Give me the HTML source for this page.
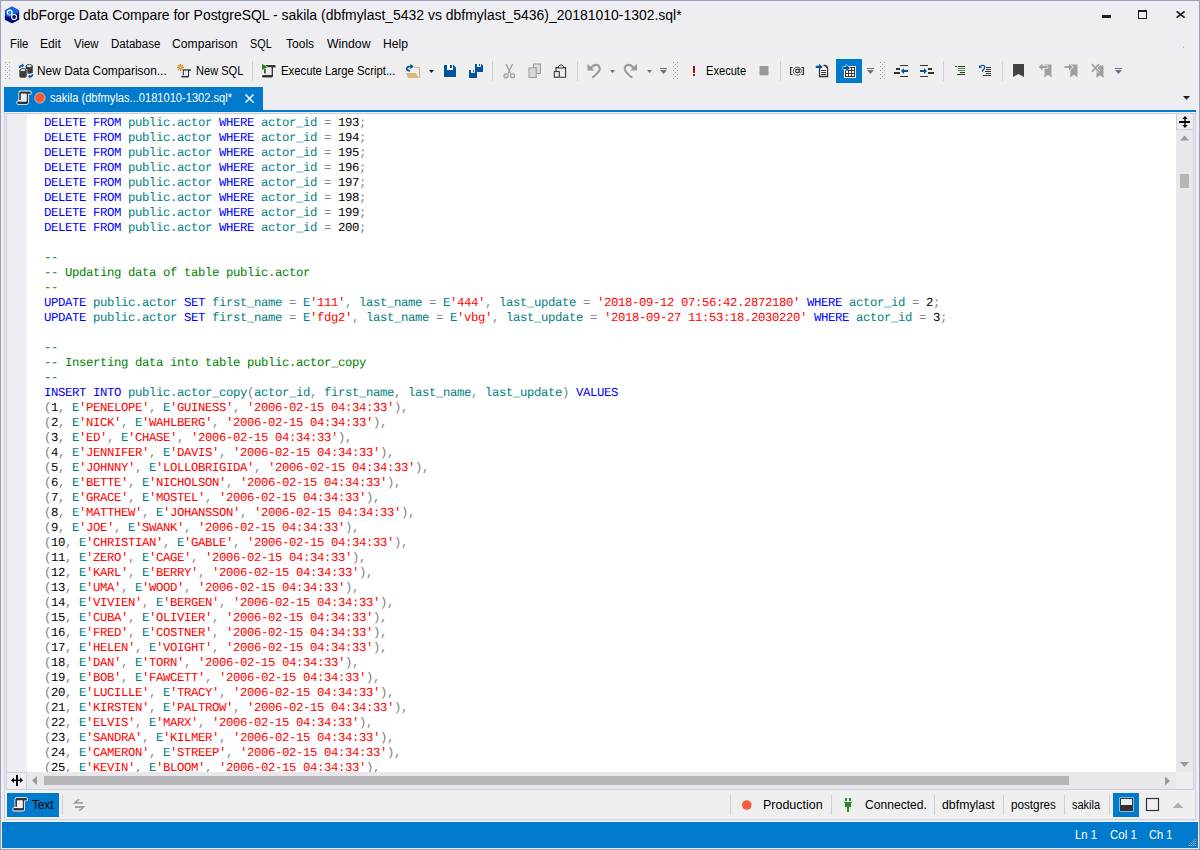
<!DOCTYPE html>
<html><head><meta charset="utf-8">
<style>
*{margin:0;padding:0;box-sizing:border-box}
html,body{width:1200px;height:850px;overflow:hidden;background:#EEEEF2;font-family:"Liberation Sans",sans-serif;color:#1E1E1E}
.a{position:absolute}
#win{position:absolute;left:0;top:0;width:1200px;height:850px;border:1px solid #9B9FB9}
.t{position:absolute;white-space:nowrap;font-size:12px;line-height:14px}
.sep{position:absolute;width:1px;background:#CCCEDB}
svg{position:absolute;overflow:visible}
/* code */
#code{position:absolute;left:17px;top:2px;font-family:"Liberation Mono",monospace;font-size:12.3px;letter-spacing:-0.3800px;line-height:15px;white-space:pre;color:#000;text-rendering:geometricPrecision}
#code i{font-style:normal}
.k{color:#0000FF}.d{color:#008080}.c{color:#008000}.s{color:#FF0000}.n{color:#000}.p{color:#808080}
</style></head><body>
<div id="win"></div>

<!-- title bar -->

<!-- menu -->

<!-- toolbar texts -->

<div class="a" style="left:2px;top:57px;width:655px;height:28px;background:#EFEFF0"></div>
<div class="a" style="left:670px;top:57px;width:442px;height:28px;background:#EFEFF0"></div>
<!-- tab strip -->
<div class="a" style="left:4px;top:87px;width:259px;height:25px;background:#007ACC"></div>
<div class="a" style="left:4px;top:110px;width:1192px;height:2px;background:#007ACC"></div>

<!-- editor panel -->
<div class="a" style="left:4px;top:112px;width:1192px;height:708px;border:1px solid #CCCEDB;border-top:none;background:#EEEEF2"></div>
<div class="a" style="left:6px;top:113px;width:1188px;height:677px;border:1px solid #CCCEDB;background:#EEEEF2"></div>
<div class="a" style="left:27px;top:114px;width:1149px;height:658px;background:#fff"></div>
<div class="a" style="left:27px;top:114px;width:1149px;height:658px;overflow:hidden"><div id="code"><i class=k>DELETE</i> <i class=k>FROM</i> <i class=d>public.actor</i> <i class=k>WHERE</i> <i class=d>actor_id</i> <i class=p>=</i> <i class=n>193</i><i class=p>;</i>
<i class=k>DELETE</i> <i class=k>FROM</i> <i class=d>public.actor</i> <i class=k>WHERE</i> <i class=d>actor_id</i> <i class=p>=</i> <i class=n>194</i><i class=p>;</i>
<i class=k>DELETE</i> <i class=k>FROM</i> <i class=d>public.actor</i> <i class=k>WHERE</i> <i class=d>actor_id</i> <i class=p>=</i> <i class=n>195</i><i class=p>;</i>
<i class=k>DELETE</i> <i class=k>FROM</i> <i class=d>public.actor</i> <i class=k>WHERE</i> <i class=d>actor_id</i> <i class=p>=</i> <i class=n>196</i><i class=p>;</i>
<i class=k>DELETE</i> <i class=k>FROM</i> <i class=d>public.actor</i> <i class=k>WHERE</i> <i class=d>actor_id</i> <i class=p>=</i> <i class=n>197</i><i class=p>;</i>
<i class=k>DELETE</i> <i class=k>FROM</i> <i class=d>public.actor</i> <i class=k>WHERE</i> <i class=d>actor_id</i> <i class=p>=</i> <i class=n>198</i><i class=p>;</i>
<i class=k>DELETE</i> <i class=k>FROM</i> <i class=d>public.actor</i> <i class=k>WHERE</i> <i class=d>actor_id</i> <i class=p>=</i> <i class=n>199</i><i class=p>;</i>
<i class=k>DELETE</i> <i class=k>FROM</i> <i class=d>public.actor</i> <i class=k>WHERE</i> <i class=d>actor_id</i> <i class=p>=</i> <i class=n>200</i><i class=p>;</i>

<i class=c>--</i>
<i class=c>-- Updating data of table public.actor</i>
<i class=c>--</i>
<i class=k>UPDATE</i> <i class=d>public.actor</i> <i class=k>SET</i> <i class=d>first_name</i> <i class=p>=</i> <i class=d>E</i><i class=s>'111'</i><i class=p>,</i> <i class=d>last_name</i> <i class=p>=</i> <i class=d>E</i><i class=s>'444'</i><i class=p>,</i> <i class=d>last_update</i> <i class=p>=</i> <i class=s>'2018-09-12 07:56:42.2872180'</i> <i class=k>WHERE</i> <i class=d>actor_id</i> <i class=p>=</i> <i class=n>2</i><i class=p>;</i>
<i class=k>UPDATE</i> <i class=d>public.actor</i> <i class=k>SET</i> <i class=d>first_name</i> <i class=p>=</i> <i class=d>E</i><i class=s>'fdg2'</i><i class=p>,</i> <i class=d>last_name</i> <i class=p>=</i> <i class=d>E</i><i class=s>'vbg'</i><i class=p>,</i> <i class=d>last_update</i> <i class=p>=</i> <i class=s>'2018-09-27 11:53:18.2030220'</i> <i class=k>WHERE</i> <i class=d>actor_id</i> <i class=p>=</i> <i class=n>3</i><i class=p>;</i>

<i class=c>--</i>
<i class=c>-- Inserting data into table public.actor_copy</i>
<i class=c>--</i>
<i class=k>INSERT</i> <i class=k>INTO</i> <i class=d>public.actor_copy</i><i class=p>(</i><i class=d>actor_id</i><i class=p>,</i> <i class=d>first_name</i><i class=p>,</i> <i class=d>last_name</i><i class=p>,</i> <i class=d>last_update</i><i class=p>)</i> <i class=k>VALUES</i>
<i class=p>(</i><i class=n>1</i><i class=p>,</i> <i class=d>E</i><i class=s>'PENELOPE'</i><i class=p>,</i> <i class=d>E</i><i class=s>'GUINESS'</i><i class=p>,</i> <i class=s>'2006-02-15 04:34:33'</i><i class=p>)</i><i class=p>,</i>
<i class=p>(</i><i class=n>2</i><i class=p>,</i> <i class=d>E</i><i class=s>'NICK'</i><i class=p>,</i> <i class=d>E</i><i class=s>'WAHLBERG'</i><i class=p>,</i> <i class=s>'2006-02-15 04:34:33'</i><i class=p>)</i><i class=p>,</i>
<i class=p>(</i><i class=n>3</i><i class=p>,</i> <i class=d>E</i><i class=s>'ED'</i><i class=p>,</i> <i class=d>E</i><i class=s>'CHASE'</i><i class=p>,</i> <i class=s>'2006-02-15 04:34:33'</i><i class=p>)</i><i class=p>,</i>
<i class=p>(</i><i class=n>4</i><i class=p>,</i> <i class=d>E</i><i class=s>'JENNIFER'</i><i class=p>,</i> <i class=d>E</i><i class=s>'DAVIS'</i><i class=p>,</i> <i class=s>'2006-02-15 04:34:33'</i><i class=p>)</i><i class=p>,</i>
<i class=p>(</i><i class=n>5</i><i class=p>,</i> <i class=d>E</i><i class=s>'JOHNNY'</i><i class=p>,</i> <i class=d>E</i><i class=s>'LOLLOBRIGIDA'</i><i class=p>,</i> <i class=s>'2006-02-15 04:34:33'</i><i class=p>)</i><i class=p>,</i>
<i class=p>(</i><i class=n>6</i><i class=p>,</i> <i class=d>E</i><i class=s>'BETTE'</i><i class=p>,</i> <i class=d>E</i><i class=s>'NICHOLSON'</i><i class=p>,</i> <i class=s>'2006-02-15 04:34:33'</i><i class=p>)</i><i class=p>,</i>
<i class=p>(</i><i class=n>7</i><i class=p>,</i> <i class=d>E</i><i class=s>'GRACE'</i><i class=p>,</i> <i class=d>E</i><i class=s>'MOSTEL'</i><i class=p>,</i> <i class=s>'2006-02-15 04:34:33'</i><i class=p>)</i><i class=p>,</i>
<i class=p>(</i><i class=n>8</i><i class=p>,</i> <i class=d>E</i><i class=s>'MATTHEW'</i><i class=p>,</i> <i class=d>E</i><i class=s>'JOHANSSON'</i><i class=p>,</i> <i class=s>'2006-02-15 04:34:33'</i><i class=p>)</i><i class=p>,</i>
<i class=p>(</i><i class=n>9</i><i class=p>,</i> <i class=d>E</i><i class=s>'JOE'</i><i class=p>,</i> <i class=d>E</i><i class=s>'SWANK'</i><i class=p>,</i> <i class=s>'2006-02-15 04:34:33'</i><i class=p>)</i><i class=p>,</i>
<i class=p>(</i><i class=n>10</i><i class=p>,</i> <i class=d>E</i><i class=s>'CHRISTIAN'</i><i class=p>,</i> <i class=d>E</i><i class=s>'GABLE'</i><i class=p>,</i> <i class=s>'2006-02-15 04:34:33'</i><i class=p>)</i><i class=p>,</i>
<i class=p>(</i><i class=n>11</i><i class=p>,</i> <i class=d>E</i><i class=s>'ZERO'</i><i class=p>,</i> <i class=d>E</i><i class=s>'CAGE'</i><i class=p>,</i> <i class=s>'2006-02-15 04:34:33'</i><i class=p>)</i><i class=p>,</i>
<i class=p>(</i><i class=n>12</i><i class=p>,</i> <i class=d>E</i><i class=s>'KARL'</i><i class=p>,</i> <i class=d>E</i><i class=s>'BERRY'</i><i class=p>,</i> <i class=s>'2006-02-15 04:34:33'</i><i class=p>)</i><i class=p>,</i>
<i class=p>(</i><i class=n>13</i><i class=p>,</i> <i class=d>E</i><i class=s>'UMA'</i><i class=p>,</i> <i class=d>E</i><i class=s>'WOOD'</i><i class=p>,</i> <i class=s>'2006-02-15 04:34:33'</i><i class=p>)</i><i class=p>,</i>
<i class=p>(</i><i class=n>14</i><i class=p>,</i> <i class=d>E</i><i class=s>'VIVIEN'</i><i class=p>,</i> <i class=d>E</i><i class=s>'BERGEN'</i><i class=p>,</i> <i class=s>'2006-02-15 04:34:33'</i><i class=p>)</i><i class=p>,</i>
<i class=p>(</i><i class=n>15</i><i class=p>,</i> <i class=d>E</i><i class=s>'CUBA'</i><i class=p>,</i> <i class=d>E</i><i class=s>'OLIVIER'</i><i class=p>,</i> <i class=s>'2006-02-15 04:34:33'</i><i class=p>)</i><i class=p>,</i>
<i class=p>(</i><i class=n>16</i><i class=p>,</i> <i class=d>E</i><i class=s>'FRED'</i><i class=p>,</i> <i class=d>E</i><i class=s>'COSTNER'</i><i class=p>,</i> <i class=s>'2006-02-15 04:34:33'</i><i class=p>)</i><i class=p>,</i>
<i class=p>(</i><i class=n>17</i><i class=p>,</i> <i class=d>E</i><i class=s>'HELEN'</i><i class=p>,</i> <i class=d>E</i><i class=s>'VOIGHT'</i><i class=p>,</i> <i class=s>'2006-02-15 04:34:33'</i><i class=p>)</i><i class=p>,</i>
<i class=p>(</i><i class=n>18</i><i class=p>,</i> <i class=d>E</i><i class=s>'DAN'</i><i class=p>,</i> <i class=d>E</i><i class=s>'TORN'</i><i class=p>,</i> <i class=s>'2006-02-15 04:34:33'</i><i class=p>)</i><i class=p>,</i>
<i class=p>(</i><i class=n>19</i><i class=p>,</i> <i class=d>E</i><i class=s>'BOB'</i><i class=p>,</i> <i class=d>E</i><i class=s>'FAWCETT'</i><i class=p>,</i> <i class=s>'2006-02-15 04:34:33'</i><i class=p>)</i><i class=p>,</i>
<i class=p>(</i><i class=n>20</i><i class=p>,</i> <i class=d>E</i><i class=s>'LUCILLE'</i><i class=p>,</i> <i class=d>E</i><i class=s>'TRACY'</i><i class=p>,</i> <i class=s>'2006-02-15 04:34:33'</i><i class=p>)</i><i class=p>,</i>
<i class=p>(</i><i class=n>21</i><i class=p>,</i> <i class=d>E</i><i class=s>'KIRSTEN'</i><i class=p>,</i> <i class=d>E</i><i class=s>'PALTROW'</i><i class=p>,</i> <i class=s>'2006-02-15 04:34:33'</i><i class=p>)</i><i class=p>,</i>
<i class=p>(</i><i class=n>22</i><i class=p>,</i> <i class=d>E</i><i class=s>'ELVIS'</i><i class=p>,</i> <i class=d>E</i><i class=s>'MARX'</i><i class=p>,</i> <i class=s>'2006-02-15 04:34:33'</i><i class=p>)</i><i class=p>,</i>
<i class=p>(</i><i class=n>23</i><i class=p>,</i> <i class=d>E</i><i class=s>'SANDRA'</i><i class=p>,</i> <i class=d>E</i><i class=s>'KILMER'</i><i class=p>,</i> <i class=s>'2006-02-15 04:34:33'</i><i class=p>)</i><i class=p>,</i>
<i class=p>(</i><i class=n>24</i><i class=p>,</i> <i class=d>E</i><i class=s>'CAMERON'</i><i class=p>,</i> <i class=d>E</i><i class=s>'STREEP'</i><i class=p>,</i> <i class=s>'2006-02-15 04:34:33'</i><i class=p>)</i><i class=p>,</i>
<i class=p>(</i><i class=n>25</i><i class=p>,</i> <i class=d>E</i><i class=s>'KEVIN'</i><i class=p>,</i> <i class=d>E</i><i class=s>'BLOOM'</i><i class=p>,</i> <i class=s>'2006-02-15 04:34:33'</i><i class=p>)</i><i class=p>,</i></div></div>
<!-- vscroll -->
<div class="a" style="left:1176px;top:129px;width:17px;height:643px;background:#E8E8EC"></div>
<div class="a" style="left:1176px;top:113px;width:18px;height:17px;border:1px solid #CCCEDB;background:#EEEEF2"></div>
<div class="a" style="left:1180px;top:174px;width:9px;height:14px;background:#B5B5B8"></div>
<!-- hscroll -->
<div class="a" style="left:27px;top:772px;width:1149px;height:17px;background:#E8E8EC"></div>
<div class="a" style="left:6px;top:772px;width:21px;height:18px;border:1px solid #CCCEDB;background:#EEEEF2"></div>
<div class="a" style="left:44px;top:776px;width:1025px;height:9px;background:#B5B5B8"></div>

<!-- bottom toolbar -->
<div class="a" style="left:5px;top:790px;width:1190px;height:29px;background:#EFEFF0"></div>
<div class="a" style="left:7px;top:793px;width:52px;height:24px;background:#007ACC"></div>
<div class="a" style="left:1113px;top:793px;width:26px;height:24px;background:#007ACC"></div>

<!-- status bar -->
<div class="a" style="left:2px;top:822px;width:1196px;height:26px;background:#007ACC"></div>


<div class="t" style="left:23.40px;top:7px;font-size:14px;line-height:16px;color:#000000;transform:scaleX(0.9964);transform-origin:0 0;">dbForge Data Compare for PostgreSQL - sakila (dbfmylast_5432 vs dbfmylast_5436)_20181010-1302.sql*</div>
<div class="t" style="left:9.55px;top:37px;font-size:12px;line-height:14px;color:#000000;transform:scaleX(0.9401);transform-origin:0 0;">File</div>
<div class="t" style="left:40.36px;top:37px;font-size:12px;line-height:14px;color:#000000;transform:scaleX(1.0093);transform-origin:0 0;">Edit</div>
<div class="t" style="left:74.24px;top:37px;font-size:12px;line-height:14px;color:#000000;transform:scaleX(0.9475);transform-origin:0 0;">View</div>
<div class="t" style="left:111.38px;top:37px;font-size:12px;line-height:14px;color:#000000;transform:scaleX(0.9595);transform-origin:0 0;">Database</div>
<div class="t" style="left:172.32px;top:37px;font-size:12px;line-height:14px;color:#000000;transform:scaleX(1.0119);transform-origin:0 0;">Comparison</div>
<div class="t" style="left:250.36px;top:37px;font-size:12px;line-height:14px;color:#000000;transform:scaleX(0.9017);transform-origin:0 0;">SQL</div>
<div class="t" style="left:285.70px;top:37px;font-size:12px;line-height:14px;color:#000000;transform:scaleX(1.0031);transform-origin:0 0;">Tools</div>
<div class="t" style="left:326.80px;top:37px;font-size:12px;line-height:14px;color:#000000;transform:scaleX(1.0183);transform-origin:0 0;">Window</div>
<div class="t" style="left:383.43px;top:37px;font-size:12px;line-height:14px;color:#000000;transform:scaleX(1.0098);transform-origin:0 0;">Help</div>
<div class="t" style="left:37.39px;top:64px;font-size:12px;line-height:14px;color:#000000;transform:scaleX(0.9922);transform-origin:0 0;">New Data Comparison...</div>
<div class="t" style="left:195.90px;top:64px;font-size:12px;line-height:14px;color:#000000;transform:scaleX(0.9210);transform-origin:0 0;">New SQL</div>
<div class="t" style="left:280.91px;top:64px;font-size:12px;line-height:14px;color:#000000;transform:scaleX(0.9422);transform-origin:0 0;">Execute Large Script...</div>
<div class="t" style="left:705.89px;top:64px;font-size:12px;line-height:14px;color:#000000;transform:scaleX(0.9255);transform-origin:0 0;">Execute</div>
<div class="t" style="left:50.18px;top:91px;font-size:12px;line-height:14px;color:#FFFFFF;transform:scaleX(0.9249);transform-origin:0 0;">sakila (dbfmylas...0181010-1302.sql*</div>
<div class="t" style="left:32.37px;top:798px;font-size:12px;line-height:14px;color:#000000;transform:scaleX(0.9735);transform-origin:0 0;">Text</div>
<div class="t" style="left:763.31px;top:798px;font-size:12px;line-height:14px;color:#000000;transform:scaleX(1.0386);transform-origin:0 0;">Production</div>
<div class="t" style="left:864.82px;top:798px;font-size:12px;line-height:14px;color:#000000;transform:scaleX(1.0079);transform-origin:0 0;">Connected.</div>
<div class="t" style="left:942.41px;top:798px;font-size:12px;line-height:14px;color:#000000;transform:scaleX(1.0272);transform-origin:0 0;">dbfmylast</div>
<div class="t" style="left:1010.58px;top:798px;font-size:12px;line-height:14px;color:#000000;transform:scaleX(0.9754);transform-origin:0 0;">postgres</div>
<div class="t" style="left:1072.00px;top:798px;font-size:12px;line-height:14px;color:#000000;transform:scaleX(0.9127);transform-origin:0 0;">sakila</div>
<div class="t" style="left:1075.42px;top:828px;font-size:12px;line-height:14px;color:#FFFFFF;transform:scaleX(0.9404);transform-origin:0 0;">Ln 1</div>
<div class="t" style="left:1110.47px;top:828px;font-size:12px;line-height:14px;color:#FFFFFF;transform:scaleX(0.9572);transform-origin:0 0;">Col 1</div>
<div class="t" style="left:1149.46px;top:828px;font-size:12px;line-height:14px;color:#FFFFFF;transform:scaleX(0.9191);transform-origin:0 0;">Ch 1</div>
<svg width="1200" height="850" style="left:0;top:0">
<!-- app icon -->
<polygon points="12,6.6 19.1,10.3 19.1,19.7 12,23.3 4.9,19.7 4.9,10.3" fill="#0C50D0"/>
<polygon points="4.9,15.5 4.9,19.7 12,23.3 19.1,19.7 19.1,12 15,14.5 9,17.5" fill="#000C78"/>
<polygon points="12,6.6 19.1,10.3 19.1,12 12,15 4.9,11.5 4.9,10.3" fill="#1A62E0"/>
<circle cx="9.7" cy="12.5" r="2.4" fill="#1C88EA" stroke="#fff" stroke-width="1.2"/>
<circle cx="14.1" cy="17" r="2.5" fill="#000A66" stroke="#fff" stroke-width="1.2"/>
<rect x="12.6" y="17.6" width="3" height="0.9" fill="#4A6EA8"/>
<rect x="8.2" y="14.2" width="3" height="0.8" fill="#4A90E0"/>
<!-- window controls -->
<rect x="1102" y="15" width="9" height="3" fill="#1E1E1E"/>
<rect x="1138.5" y="10.5" width="8" height="8" fill="none" stroke="#1E1E1E" stroke-width="1"/>
<rect x="1138" y="10" width="9" height="2" fill="#1E1E1E"/>
<path d="M1176.6 11.4 L1184.6 17.6 M1184.6 11.4 L1176.6 17.6" stroke="#1E1E1E" stroke-width="1.8"/>

<!-- toolbar grips -->
<g fill="#999">
<rect x="5" y="62" width="1" height="1"/><rect x="9" y="62" width="1" height="1"/><rect x="7" y="64" width="1" height="1"/>
<rect x="5" y="66" width="1" height="1"/><rect x="9" y="66" width="1" height="1"/><rect x="7" y="68" width="1" height="1"/>
<rect x="5" y="70" width="1" height="1"/><rect x="9" y="70" width="1" height="1"/><rect x="7" y="72" width="1" height="1"/>
<rect x="5" y="74" width="1" height="1"/><rect x="9" y="74" width="1" height="1"/><rect x="7" y="76" width="1" height="1"/>
<rect x="5" y="78" width="1" height="1"/><rect x="9" y="78" width="1" height="1"/>
<rect x="673" y="62" width="1" height="1"/><rect x="677" y="62" width="1" height="1"/><rect x="675" y="64" width="1" height="1"/>
<rect x="673" y="66" width="1" height="1"/><rect x="677" y="66" width="1" height="1"/><rect x="675" y="68" width="1" height="1"/>
<rect x="673" y="70" width="1" height="1"/><rect x="677" y="70" width="1" height="1"/><rect x="675" y="72" width="1" height="1"/>
<rect x="673" y="74" width="1" height="1"/><rect x="677" y="74" width="1" height="1"/><rect x="675" y="76" width="1" height="1"/>
<rect x="673" y="78" width="1" height="1"/><rect x="677" y="78" width="1" height="1"/>
<rect x="880" y="62" width="1" height="1"/><rect x="884" y="62" width="1" height="1"/><rect x="882" y="64" width="1" height="1"/>
<rect x="880" y="66" width="1" height="1"/><rect x="884" y="66" width="1" height="1"/><rect x="882" y="68" width="1" height="1"/>
<rect x="880" y="70" width="1" height="1"/><rect x="884" y="70" width="1" height="1"/><rect x="882" y="72" width="1" height="1"/>
<rect x="880" y="74" width="1" height="1"/><rect x="884" y="74" width="1" height="1"/><rect x="882" y="76" width="1" height="1"/>
<rect x="880" y="78" width="1" height="1"/><rect x="884" y="78" width="1" height="1"/>
</g>
<!-- separators -->
<g fill="#CCCEDB">
<rect x="252" y="61" width="1" height="20"/><rect x="492" y="61" width="1" height="20"/><rect x="577" y="61" width="1" height="20"/>
<rect x="780" y="61" width="1" height="20"/><rect x="943" y="61" width="1" height="20"/><rect x="1002" y="61" width="1" height="20"/>
<rect x="62" y="795" width="1" height="20"/><rect x="730" y="795" width="1" height="20"/><rect x="831" y="795" width="1" height="20"/>
<rect x="934" y="795" width="1" height="20"/><rect x="1003" y="795" width="1" height="20"/><rect x="1064" y="795" width="1" height="20"/>
<rect x="1109" y="795" width="1" height="20"/>
</g>

<!-- New Data Comparison icon -->
<path d="M25.6 65.8 V72.6 Q25.6 73.7 29.2 73.7 Q32.8 73.7 32.8 72.6 V65.8 Z" fill="#3C3C3C"/>
<ellipse cx="29.2" cy="66" rx="3.1" ry="1.45" fill="#fff" stroke="#3C3C3C" stroke-width="1"/>
<path d="M19.3 69.9 V75.9 Q19.3 77.8 23 77.8 Q26.7 77.8 26.7 75.9 V69.9 Z" fill="#3C3C3C" stroke="#EFEFF0" stroke-width="1.2" paint-order="stroke"/>
<ellipse cx="23" cy="70.1" rx="3.1" ry="1.45" fill="#fff" stroke="#3C3C3C" stroke-width="1"/>
<path d="M19.6 68 q0 -2.5 2.6 -2.5" fill="none" stroke="#0055A8" stroke-width="1.6"/>
<path d="M21.9 63.5 l2.5 2 l-2.5 2z" fill="#0055A8"/>
<path d="M32.6 74.3 q0 2.3 -2.6 2.3" fill="none" stroke="#0055A8" stroke-width="1.6"/>
<path d="M30.3 74.6 l-2.5 2 l2.5 2z" fill="#0055A8"/>

<!-- New SQL icon -->
<g transform="translate(181.2,69.2) scale(0.72,0.66)"><path d="M2.1 8.6 V1.5 Q2.1 0 3.6 0 H12.7 Q13.7 0 13.7 1.2 V2.4 H11 V11.2 Q11 12.5 9.7 12.5 H1 Q0 12.5 0 11.3 Q0 10 1 10 H9.4 V2.4 H3.8 V8.6 Z" fill="#333" stroke="#fff" stroke-width="1.4" stroke-linejoin="round" paint-order="stroke"/><rect x="3.8" y="2.4" width="5.6" height="7.6" fill="#EEEEF2"/></g>
<g stroke="#D4851C" stroke-width="1.1" fill="none">
<path d="M180.5 64 v7 M177 67.5 h7 M178 65 l5 5 M183 65 l-5 5"/>
</g>
<circle cx="180.5" cy="67.5" r="1.2" fill="#fff" stroke="#D4851C" stroke-width="1"/>

<!-- Execute large script icon -->
<g transform="translate(262,65)"><path d="M2.1 8.6 V1.5 Q2.1 0 3.6 0 H12.7 Q13.7 0 13.7 1.2 V2.4 H11 V11.2 Q11 12.5 9.7 12.5 H1 Q0 12.5 0 11.3 Q0 10 1 10 H9.4 V2.4 H3.8 V8.6 Z" fill="#333" stroke="#fff" stroke-width="1.4" stroke-linejoin="round" paint-order="stroke"/><rect x="3.8" y="2.4" width="5.6" height="7.6" fill="#EEEEF2"/></g>
<path d="M262 63.8 L267.4 67 L262 70.2Z" fill="#1F8A1F" stroke="#fff" stroke-width="1" paint-order="stroke"/>

<!-- Open folder -->
<path d="M414 67.5 h5.5 v10.3" fill="none" stroke="#DCB67A" stroke-width="1.2"/>
<path d="M406 73 h9.5 l3.5 5 h-11z" fill="#DCB67A"/>
<path d="M409.8 70.9 Q406.2 70.2 406.9 68.1 Q407.6 66.4 411 66.4" fill="none" stroke="#0055A8" stroke-width="1.7"/>
<path d="M410.4 63.9 l3.4 2.5 l-3.4 2.5z" fill="#0055A8"/>
<path d="M429 70 h5 l-2.5 3z" fill="#1E1E1E"/>

<!-- Save -->
<path d="M444 65 h9.5 l2.5 2.5 v9.5 h-12z" fill="#00539C"/>
<rect x="447" y="65" width="6" height="5" fill="#fff"/>
<rect x="450" y="65" width="2" height="3" fill="#00539C"/>
<!-- Save all -->
<path d="M475 64 h6.5 l1.5 1.5 v6.5 h-8z" fill="#00539C"/>
<rect x="477" y="64" width="4" height="2.8" fill="#fff"/>
<rect x="479" y="64" width="1" height="1.8" fill="#00539C"/>
<path d="M469 70 h6.5 l1.5 1.5 v6.5 h-8z" fill="#00539C" stroke="#EEEEF2" stroke-width="0"/>
<rect x="471" y="70" width="4" height="2.8" fill="#fff"/>
<rect x="473" y="70" width="1" height="1.8" fill="#00539C"/>

<!-- Scissors -->
<g stroke="#999" stroke-width="1.2" fill="none">
<path d="M506 64 L510.5 73.5 M512.5 64 L508 73.5"/>
<circle cx="506" cy="75.8" r="2"/><circle cx="512.5" cy="75.8" r="2"/>
</g>
<!-- Copy -->
<rect x="533.5" y="64" width="7" height="9.5" fill="#DADADA" stroke="#999" stroke-width="1"/>
<rect x="529" y="67.8" width="7.2" height="9.7" fill="#D8D8D8" stroke="#999" stroke-width="1"/>
<!-- Paste -->
<path d="M559 67.6 h-3 v9.5 M560 77.2 h5.6 v-9.6 h-2.5" fill="#EEEEF2" stroke="#333" stroke-width="1.1"/>
<path d="M558.5 68 h5 v-1.5 l-1.5 -1.5 h-2 l-1.5 1.5z" fill="#EEEEF2" stroke="#333" stroke-width="1"/>
<rect x="554.3" y="71.6" width="5" height="5.6" fill="#EEEEF2" stroke="#333" stroke-width="1.1"/>

<!-- Undo/Redo -->
<g stroke="#999" stroke-width="2.1" fill="none">
<path d="M590.5 68.5 Q593.5 64.3 597 65 Q600.3 66 599.6 69.8 Q598.8 72.5 592.3 77.8"/>
<path d="M634 68.5 Q631 64.3 627.5 65 Q624.2 66 624.9 69.8 Q625.7 72.5 632.2 77.8"/>
</g>
<path d="M587.5 63.8 L587.5 70.6 L594.3 70.6z" fill="#999"/>
<path d="M637 63.8 L637 70.6 L630.2 70.6z" fill="#999"/>
<g fill="#717171">
<path d="M610 70 h5 l-2.5 3z"/><path d="M647 70 h5 l-2.5 3z"/>
<rect x="660" y="68" width="7" height="1"/><path d="M660 70 h7 l-3.5 4z"/>
<rect x="867" y="68" width="7" height="1"/><path d="M867 70 h7 l-3.5 4z"/>
<rect x="1115" y="68" width="7" height="1"/><path d="M1115 70 h7 l-3.5 4z"/>
</g>

<!-- Execute ! -->
<rect x="693" y="66" width="2" height="7" fill="#A31515"/>
<rect x="693" y="74" width="2" height="2" fill="#A31515"/>
<!-- stop -->
<rect x="759.5" y="66" width="9" height="9.3" fill="#999"/>

<!-- [@] -->
<path d="M792.6 67.5 h-2 v7 h2 M801.4 67.5 h2 v7 h-2" stroke="#333" stroke-width="1.2" fill="none"/>
<path d="M800 74.2 A4 4 0 1 1 801.3 70.5 v1 q0 1.3 -1.1 1.3 q-0.9 0 -0.9 -1.3 v-3.2" fill="none" stroke="#555" stroke-width="1"/><circle cx="797.4" cy="70.9" r="1.8" fill="none" stroke="#333" stroke-width="1.2"/>
<!-- doc with arrow -->
<path d="M819.5 69 v7.5 h8 v-8.5 l-2.5 -2.5 h-1.5" fill="#fff" stroke="#333" stroke-width="1.3"/>
<path d="M824.5 65.5 l3 0 l0 2.8z" fill="#333"/>
<g fill="#333"><rect x="821" y="70" width="5" height="1"/><rect x="821" y="72" width="5" height="1"/><rect x="821" y="74" width="5" height="1"/></g>
<path d="M815.8 65.8 h3.2 v-2 l3.8 3.1 l-3.8 3.1 v-2 h-3.2z" fill="#00539C"/>

<!-- active button grid -->
<rect x="836" y="59" width="26" height="24" fill="#007ACC"/>
<rect x="844" y="66" width="12" height="12" fill="#fff"/>
<rect x="845" y="67" width="10" height="10" fill="#333"/>
<g fill="#fff">
<rect x="849" y="68" width="2" height="2"/><rect x="852" y="68" width="2" height="2"/>
<rect x="846" y="71" width="2" height="2"/><rect x="849" y="71" width="2" height="2"/><rect x="852" y="71" width="2" height="2"/>
<rect x="846" y="74" width="2" height="2"/><rect x="849" y="74" width="2" height="2"/><rect x="852" y="74" width="2" height="2"/>
</g>
<path d="M843 66.8 h3.2 v-2 l3.9 3.1 l-3.9 3.1 v-2 h-3.2z" fill="#00539C" stroke="#fff" stroke-width="1" stroke-linejoin="round" paint-order="stroke"/>

<!-- indent -->
<g fill="#333">
<rect x="900" y="65" width="8" height="1"/><rect x="896" y="68" width="4" height="2"/><rect x="894" y="72" width="6" height="2"/><rect x="900" y="76" width="8" height="1"/>
<rect x="920" y="65" width="8" height="1"/><rect x="928" y="68" width="4" height="2"/><rect x="928" y="72" width="6" height="2"/><rect x="920" y="76" width="8" height="1"/>
</g>
<path d="M908 70 h-4 v-2 l-3 3 l3 3 v-2 h4z" fill="#00539C"/>
<path d="M920 70 h4 v-2 l3 3 l-3 3 v-2 h-4z" fill="#00539C"/>

<!-- format -->
<g fill="#333"><rect x="955" y="66" width="2" height="1"/><rect x="958" y="66" width="7" height="1"/><rect x="960" y="72" width="5" height="1"/><rect x="957" y="74" width="8" height="1"/>
<rect x="986" y="67" width="5" height="1"/><rect x="986" y="69" width="5" height="1"/><rect x="985" y="71" width="6" height="1"/><rect x="986" y="73" width="5" height="1"/><rect x="983" y="75" width="8" height="1"/></g>
<g fill="#339933"><rect x="958" y="68" width="7" height="1"/><rect x="958" y="70" width="7" height="1"/></g>
<path d="M980.5 66.3 q2 -1.5 3.5 -0.5 q1.5 1 0 3.2 l-2 2.5" fill="none" stroke="#00539C" stroke-width="1.3"/>
<path d="M979 65 l0 3.2 l3 -0.5z" fill="#00539C"/>

<!-- bookmarks -->
<path d="M1013 64 h11 v13 l-5.5 -3 l-5.5 3z" fill="#424242"/>
<g fill="#A0A0A0">
<path d="M1044.5 64.5 h7 v13 l-3.5 -2.7 l-3.5 2.7z"/>
<path d="M1070.3 64.5 h7.2 v13 l-3.6 -2.7 l-3.6 2.7z"/>
<path d="M1096.5 65.5 h7 v12.5 l-3.5 -2.7 l-3.5 2.7z"/>
</g>
<g fill="#A0A0A0" stroke="#EFEFF0" stroke-width="1.4" paint-order="stroke" stroke-linejoin="round">
<path d="M1047.5 66 h-5 v-2.5 l-3.8 3.5 l3.8 3.5 v-2.5 h5z"/>
<path d="M1064.5 66 h4.5 v-2.5 l3.8 3.5 l-3.8 3.5 v-2.5 h-4.5z"/>
</g>
<path d="M1091.8 64.2 l7.2 7.6 M1099 64.2 l-7.2 7.6" stroke="#EFEFF0" stroke-width="3.2" fill="none"/>
<path d="M1091.8 64.2 l7.2 7.6 M1099 64.2 l-7.2 7.6" stroke="#A0A0A0" stroke-width="1.7" fill="none"/>

<rect x="1183" y="46.5" width="1" height="1.5" fill="#7CC4F0"/>
<!-- tab dropdown -->
<path d="M1183 96 h7 l-3.5 3.8z" fill="#1E1E1E"/>

<!-- tab script icon -->
<g transform="translate(17.1,91.4)"><path d="M2.1 8.6 V1.5 Q2.1 0 3.6 0 H12.7 Q13.7 0 13.7 1.2 V2.4 H11 V11.2 Q11 12.5 9.7 12.5 H1 Q0 12.5 0 11.3 Q0 10 1 10 H9.4 V2.4 H3.8 V8.6 Z" fill="#333" stroke="#fff" stroke-width="1.6" stroke-linejoin="round" paint-order="stroke"/><rect x="3.8" y="2.4" width="5.6" height="7.6" fill="#EEEEF2"/></g>
<circle cx="39.9" cy="97.9" r="5.3" fill="#F75B3E" stroke="#fff" stroke-width="0.7" stroke-opacity="0.7"/>
<!-- tab close -->
<path d="M245.5 94.5 L253.5 102.5 M253.5 94.5 L245.5 102.5" stroke="#fff" stroke-width="1.5"/>

<!-- splitter buttons -->
<rect x="1179" y="121" width="11" height="2" fill="#000"/>
<rect x="1184.3" y="117" width="1.4" height="10" fill="#000"/>
<path d="M1182.3 119 h5.4 l-2.7 -3z M1182.3 125 h5.4 l-2.7 3z" fill="#000"/>
<rect x="16" y="775" width="2" height="11" fill="#000"/>
<rect x="13" y="779.6" width="8" height="1.4" fill="#000"/>
<path d="M14 777.6 v5.4 l-3 -2.7z M20 777.6 v5.4 l3 -2.7z" fill="#000"/>
<!-- scroll arrows -->
<g fill="#999">
<path d="M1180 140.5 h9 l-4.5 -5z"/>
<path d="M1180 762 h9 l-4.5 5z"/>
<path d="M37 776 v9 l-5 -4.5z"/>
<path d="M1165 776.5 v9 l5 -4.5z"/>
</g>

<!-- Text button icon -->
<g transform="translate(13.2,798.1)"><path d="M2.1 8.6 V1.5 Q2.1 0 3.6 0 H12.7 Q13.7 0 13.7 1.2 V2.4 H11 V11.2 Q11 12.5 9.7 12.5 H1 Q0 12.5 0 11.3 Q0 10 1 10 H9.4 V2.4 H3.8 V8.6 Z" fill="#333" stroke="#fff" stroke-width="1.6" stroke-linejoin="round" paint-order="stroke"/><rect x="3.8" y="2.4" width="5.6" height="7.6" fill="#EEEEF2"/></g>
<!-- swap icon -->
<g fill="#A0A0A0">
<path d="M72.8 803.8 L77.3 799.2 L80.2 799.2 L77.2 801.9 L83 801.9 L83 803.8z"/>
<path d="M75 806 L85.6 806 L81 810.6 L78.1 810.6 L81.2 807.9 L75 807.9z"/>
</g>
<!-- status grip -->
<g fill="#8A7A70"><rect x="1194" y="838" width="1" height="1"/><rect x="1192" y="840" width="1" height="1"/><rect x="1194" y="840" width="1" height="1"/><rect x="1190" y="842" width="1" height="1"/><rect x="1192" y="842" width="1" height="1"/><rect x="1194" y="842" width="1" height="1"/><rect x="1188" y="844" width="1" height="1"/><rect x="1190" y="844" width="1" height="1"/><rect x="1192" y="844" width="1" height="1"/><rect x="1194" y="844" width="1" height="1"/></g>
<g fill="#7EBEEE"><rect x="1195" y="839" width="1" height="1"/><rect x="1193" y="841" width="1" height="1"/><rect x="1195" y="841" width="1" height="1"/><rect x="1191" y="843" width="1" height="1"/><rect x="1193" y="843" width="1" height="1"/><rect x="1195" y="843" width="1" height="1"/><rect x="1189" y="845" width="1" height="1"/><rect x="1191" y="845" width="1" height="1"/><rect x="1193" y="845" width="1" height="1"/><rect x="1195" y="845" width="1" height="1"/></g>
<!-- production dot -->
<circle cx="746.8" cy="805" r="4.8" fill="#F75B3E"/>
<!-- plug -->
<g fill="#2A8A2A">
<rect x="845" y="798" width="2" height="3"/><rect x="849" y="798" width="2" height="3"/>
<rect x="844" y="802" width="8" height="1"/><rect x="845" y="802" width="6" height="5"/><rect x="847" y="807" width="2" height="5"/>
</g>
<!-- layout buttons -->
<rect x="1119.5" y="797.5" width="14" height="14" fill="#fff"/>
<rect x="1120.5" y="798.5" width="12" height="12" fill="#EEEEF2" stroke="#333" stroke-width="1"/>
<rect x="1121" y="805" width="11" height="5.5" fill="#333"/>
<rect x="1146.5" y="798.5" width="12" height="12" fill="#EEEEF2" stroke="#333" stroke-width="1.2"/>
<path d="M1172.5 808 h11 l-5.5 -5.5z" fill="#B0B0B0"/>
</svg>

</body></html>
